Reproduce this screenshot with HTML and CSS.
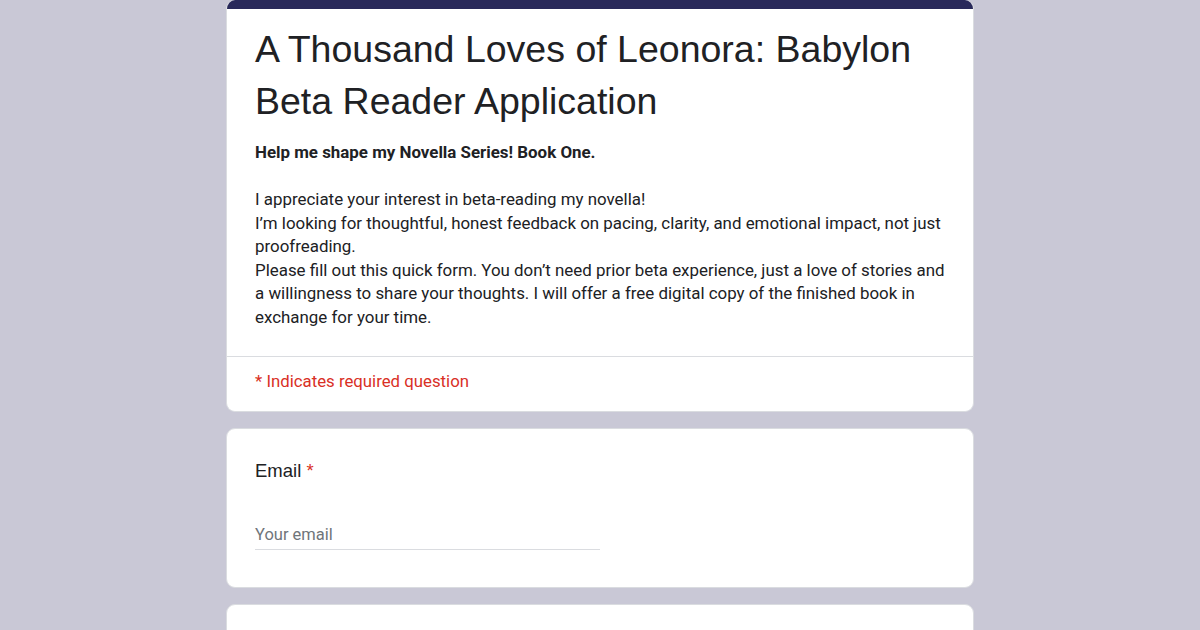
FILE: index.html
```html
<!DOCTYPE html>
<html lang="en">
<head>
<meta charset="utf-8">
<title>A Thousand Loves of Leonora: Babylon Beta Reader Application</title>
<link rel="stylesheet" href="styles.css">
</head>
<body>
<main class="form">
  <section class="card header-card">
    <div class="accent-bar"></div>
    <div class="header-body">
      <h1 class="title">A Thousand Loves of Leonora: Babylon Beta Reader Application</h1>
      <div class="description"><b>Help me shape my Novella Series! Book One.</b><br><br>I appreciate your interest in beta-reading my novella!<br>I’m looking for thoughtful, honest feedback on pacing, clarity, and emotional impact, not just proofreading.<br>Please fill out this quick form. You don’t need prior beta experience, just a love of stories and a willingness to share your thoughts. I will offer a free digital copy of the finished book in exchange for your time.</div>
    </div>
    <div class="required-note">* Indicates required question</div>
  </section>
  <section class="card question-card">
    <div class="question-label">Email <span class="star">*</span></div>
    <div class="text-input"><span class="placeholder">Your email</span></div>
  </section>
  <section class="card question-card"></section>
</main>
</body>
</html>
```
FILE: styles.css
```css
html, body {
  margin: 0;
  padding: 0;
}
body {
  background: #c9c8d6;
  font-family: Roboto, "Noto Sans", sans-serif;
  color: #202124;
}
.form {
  width: 748px;
  margin: 0 auto;
  display: flex;
  flex-direction: column;
  gap: 16px;
}
.card {
  background: #fff;
  border-radius: 9px;
  border: 1px solid #dadce0;
  box-sizing: border-box;
}
.header-card {
  overflow: hidden;
  border-top: none;
}
.accent-bar {
  height: 9px;
  background: #29295a;
}
.header-body {
  padding: 14px 28px 27px 28px;
  border-bottom: 1px solid #dadce0;
}
.title {
  margin: 0 0 14px 0;
  font-family: "Liberation Sans", Arial, sans-serif;
  font-weight: 400;
  font-size: 37.5px;
  line-height: 52px;
  color: #202124;
}
.description {
  font-size: 16.9px;
  line-height: 23.5px;
  color: #202124;
}
.description b {
  font-weight: 700;
}
.required-note {
  padding: 13px 28px 18px 28px;
  color: #d93025;
  font-size: 16.8px;
  line-height: 23px;
}
.question-card {
  padding: 29px 28px 37px 28px;
  min-height: 159px;
}
.question-label {
  font-family: "Liberation Sans", Arial, sans-serif;
  font-size: 18.5px;
  line-height: 26px;
  color: #202124;
}
.star {
  color: #d93025;
}
.text-input {
  margin-top: 40px;
  width: 345px;
  border-bottom: 1px solid #dadce0;
  padding-bottom: 3px;
}
.placeholder {
  font-size: 16.5px;
  line-height: 22px;
  color: #70757a;
}
```
